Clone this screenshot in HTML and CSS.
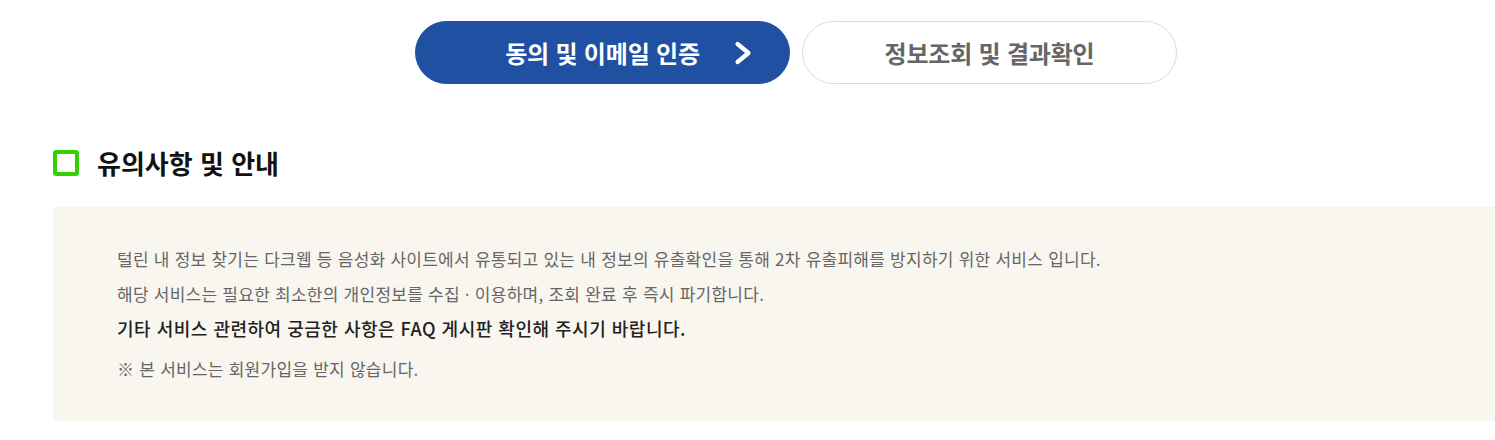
FILE: index.html
```html
<!DOCTYPE html>
<html lang="ko">
<head>
<meta charset="utf-8">
<link rel="stylesheet" href="styles.css">
</head>
<body>
<div class="steps">
  <div class="step step-active">
    <span class="step-label">동의 및 이메일 인증</span>
    <svg class="step-arrow" width="20" height="24" viewBox="0 0 20 24"><path d="M3.5 3 L14.5 12 L3.5 21" fill="none" stroke="#fff" stroke-width="4.2" stroke-linecap="round" stroke-linejoin="round"/></svg>
  </div>
  <div class="step">
    <span class="step-label">정보조회 및 결과확인</span>
  </div>
</div>
<h2 class="title"><span class="title-mark"></span>유의사항 및 안내</h2>
<div class="notice">
  <p class="line">털린 내 정보 찾기는 다크웹 등 음성화 사이트에서 유통되고 있는 내 정보의 유출확인을 통해 2차 유출피해를 방지하기 위한 서비스 입니다.</p>
  <p class="line">해당 서비스는 필요한 최소한의 개인정보를 수집 · 이용하며, 조회 완료 후 즉시 파기합니다.</p>
  <p class="line line-strong">기타 서비스 관련하여 궁금한 사항은 FAQ 게시판 확인해 주시기 바랍니다.</p>
  <p class="line line-note">※ 본 서비스는 회원가입을 받지 않습니다.</p>
</div>
</body>
</html>
```
FILE: styles.css
```css
html, body {
  margin: 0;
  padding: 0;
  background: #fff;
  font-family: "Noto Sans CJK KR", "Noto Sans", sans-serif;
}
.steps {
  display: flex;
  gap: 12px;
  padding: 21px 0 0 415px;
}
.step {
  position: relative;
  width: 375px;
  height: 63px;
  box-sizing: border-box;
  border: 1px solid #dcdcdc;
  border-radius: 32px;
  display: flex;
  align-items: center;
  justify-content: center;
  background: #fff;
}
.step-label {
  font-size: 24px;
  font-weight: 700;
  color: #666;
  letter-spacing: -0.2px;
  line-height: 1;
}
.step-active {
  background: #2050a2;
  border-color: #2050a2;
}
.step-active .step-label {
  color: #fff;
}
.step-arrow {
  position: absolute;
  left: 318px;
  top: 19px;
}
.title {
  display: flex;
  align-items: center;
  margin: 62px 0 0 53px;
  font-size: 26px;
  font-weight: 700;
  color: #111;
  letter-spacing: 0;
  line-height: 34px;
}
.title-mark {
  width: 26px;
  height: 26px;
  box-sizing: border-box;
  border: 4px solid #35d000;
  border-radius: 3px;
  margin-right: 18px;
}
.notice {
  margin: 27px 0 0 53px;
  background: #f9f6f0;
  padding: 34px 0 35px 64px;
}
.line {
  margin: 0;
  font-size: 17px;
  line-height: 35px;
  color: #666;
  letter-spacing: 0.25px;
}
.line-strong {
  font-size: 18px;
  font-weight: 500;
  color: #222;
  letter-spacing: 0.5px;
}
.line-note {
  margin-top: 5px;
}
```
